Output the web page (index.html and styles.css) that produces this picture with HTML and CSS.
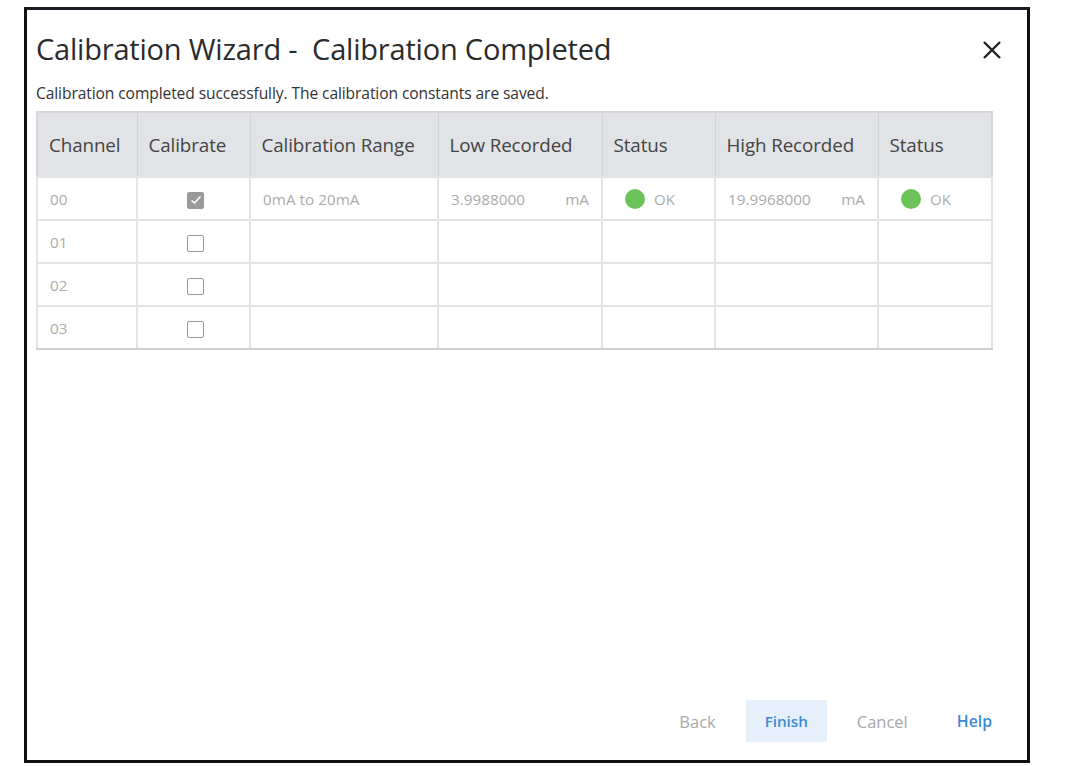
FILE: index.html
```html
<!DOCTYPE html>
<html>
<head>
<meta charset="utf-8">
<link rel="stylesheet" href="styles.css">
</head>
<body>
<div class="dialog">
  <div class="head">
    <h1 class="title">Calibration Wizard -&nbsp; Calibration Completed</h1>
    <svg class="close" width="20" height="20" viewBox="0 0 20 20"><path d="M2 2 L18 18 M18 2 L2 18" stroke="#222" stroke-width="2.4" fill="none"/></svg>
  </div>
  <p class="sub">Calibration completed successfully. The calibration constants are saved.</p>
  <table class="grid">
    <colgroup>
      <col class="c1"><col class="c2"><col class="c3"><col class="c4"><col class="c5"><col class="c6"><col class="c7">
    </colgroup>
    <thead>
      <tr><th>Channel</th><th>Calibrate</th><th>Calibration Range</th><th>Low Recorded</th><th>Status</th><th>High Recorded</th><th>Status</th></tr>
    </thead>
    <tbody>
      <tr>
        <td>00</td>
        <td class="cb"><span class="box checked"><svg width="12" height="10" viewBox="0 0 12 10"><path d="M1.5 5.5 L4.5 8 L10.5 1.5" stroke="#fff" stroke-width="1.6" fill="none"/></svg></span></td>
        <td>0mA to 20mA</td>
        <td><div class="val"><span>3.9988000</span><span>mA</span></div></td>
        <td><div class="st"><span class="dot"></span>OK</div></td>
        <td><div class="val"><span>19.9968000</span><span>mA</span></div></td>
        <td><div class="st"><span class="dot"></span>OK</div></td>
      </tr>
      <tr><td>01</td><td class="cb"><span class="box"></span></td><td></td><td></td><td></td><td></td><td></td></tr>
      <tr><td>02</td><td class="cb"><span class="box"></span></td><td></td><td></td><td></td><td></td><td></td></tr>
      <tr><td>03</td><td class="cb"><span class="box"></span></td><td></td><td></td><td></td><td></td><td></td></tr>
    </tbody>
  </table>
  <div class="spacer"></div>
  <div class="foot">
    <button class="btn muted">Back</button>
    <button class="btn primary">Finish</button>
    <button class="btn muted">Cancel</button>
    <button class="btn link">Help</button>
  </div>
</div>
</body>
</html>
```
FILE: styles.css
```css
html, body {
  margin: 0;
  padding: 0;
  background: #fff;
}
body {
  font-family: "Open Sans", "Noto Sans", sans-serif;
  color: #333;
}
.dialog {
  box-sizing: border-box;
  margin: 7px 0 0 24px;
  width: 1006px;
  height: 756px;
  border: 3px solid #111;
  border-top-color: #1b1d26;
  display: flex;
  flex-direction: column;
  padding: 0 35px 0 9px;
}
.head {
  display: flex;
  align-items: center;
  justify-content: space-between;
  height: 74px;
}
.title {
  margin: 0;
  font-weight: 400;
  font-size: 29px;
  color: #2b2b2b;
  letter-spacing: -0.2px;
  line-height: 1;
  padding-top: 2px;
}
.close {
  margin-right: -10px;
  margin-top: 6px;
}
.sub {
  box-sizing: border-box;
  margin: 0;
  height: 27px;
  padding-top: 1px;
  font-size: 15.6px;
  line-height: 17px;
  letter-spacing: -0.1px;
  color: #333;
}
.grid {
  border-collapse: collapse;
  table-layout: fixed;
  width: 957px;
  border: 2px solid #d6d6d6;
}
.c1 { width: 100px; }
.c2 { width: 113px; }
.c3 { width: 188px; }
.c4 { width: 164px; }
.c5 { width: 113px; }
.c6 { width: 163px; }
.c7 { width: 114px; }
.grid th {
  background: #e1e3e6;
  height: 63px;
  font-weight: 400;
  font-size: 18.8px;
  color: #444;
  text-align: left;
  padding: 0 11px;
  border: 1px solid #d0d2d5;
  letter-spacing: -0.1px;
}
.grid td {
  height: 41px;
  font-size: 15.3px;
  color: #acacac;
  padding: 0 12px;
  border: 2px solid #e3e3e3;
}
.grid tbody tr:last-child td {
  border-bottom: 2px solid #cfcfcf;
}
.cb {
  text-align: center;
}
.box {
  display: inline-flex;
  align-items: center;
  justify-content: center;
  box-sizing: border-box;
  width: 17px;
  height: 17px;
  border: 1.5px solid #999;
  border-radius: 2px;
  vertical-align: middle;
  background: #fff;
  margin-left: 4px;
}
.box.checked {
  background: #9a9a9a;
  border-color: #9a9a9a;
}
.val {
  display: flex;
  justify-content: space-between;
}
.st {
  display: flex;
  align-items: center;
  gap: 9px;
  padding-left: 10px;
  font-size: 15px;
}
.dot {
  width: 20px;
  height: 20px;
  border-radius: 50%;
  background: #6cc35a;
}
.spacer {
  flex: 1;
}
.foot {
  display: flex;
  justify-content: flex-end;
  align-items: center;
  margin-bottom: 18px;
}
.btn {
  font-family: "Open Sans", "Noto Sans", sans-serif;
  font-size: 16.5px;
  background: transparent;
  border: none;
  height: 42px;
  padding: 0;
  margin: 0 0 0 30px;
  cursor: pointer;
}
.muted {
  color: #a8a8a8;
}
.primary {
  background: #e5f0fb;
  color: #3d8ad6;
  font-weight: 600;
  width: 81px;
  font-size: 15.2px;
}
.link {
  color: #3d8ad6;
  font-weight: 600;
  margin-left: 49px;
  font-size: 15.8px;
}
```
